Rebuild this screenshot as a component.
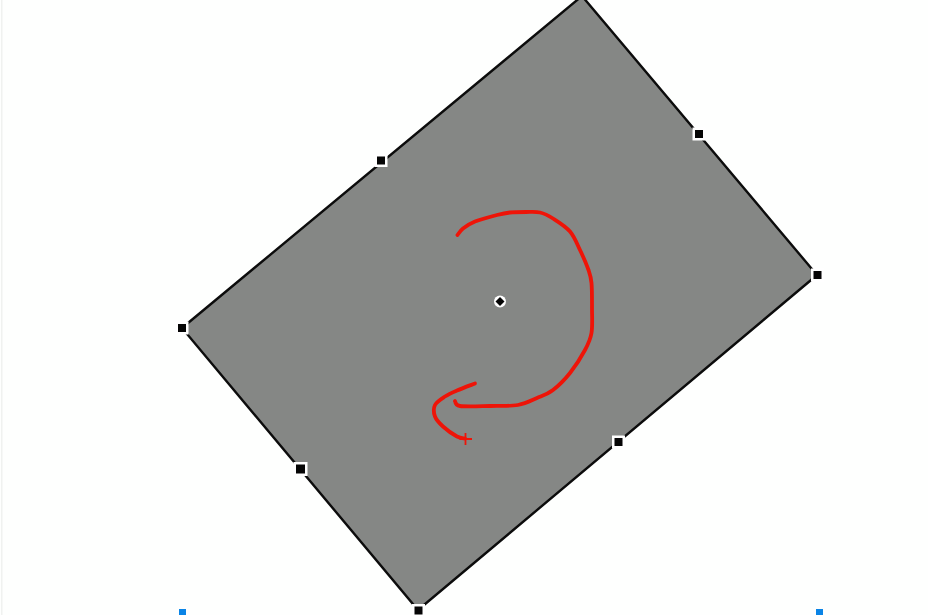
const SHAPE = '582,-4 817,275 418,610 182,328'

const HANDLES = [
  { x: 381, y: 160.5, size: 8 },
  { x: 699, y: 134, size: 8 },
  { x: 817.5, y: 275, size: 8 },
  { x: 618.5, y: 442, size: 8 },
  { x: 418.5, y: 610.5, size: 8 },
  { x: 300.5, y: 469, size: 9 },
  { x: 182, y: 328, size: 8 },
]

const STROKE_MAIN = [
  [457.5, 235], [463, 228.5], [475, 221.5], [497, 215], [510, 212.5], [526, 212], [540, 212.5], [553, 218.5],
  [570, 231.5], [580, 250], [588.5, 270], [591.5, 283], [592, 308], [591.5, 333], [585, 350], [570, 373],
  [553, 390], [537, 398], [518, 405], [490, 406], [460, 406], [455, 401],
]
const STROKE_TAIL = [
  [475, 383.5], [457, 390.5], [445, 396.5], [435, 405], [435, 416.5], [443, 426.5], [457, 436.5], [465, 438.5],
]

// smooths the hand drawn points into a curve
function smooth(pts: number[][]) {
  let d = `M${pts[0][0]} ${pts[0][1]}`
  for (let i = 0; i < pts.length - 1; i++) {
    const p0 = pts[Math.max(i - 1, 0)]
    const p1 = pts[i]
    const p2 = pts[i + 1]
    const p3 = pts[Math.min(i + 2, pts.length - 1)]
    const c1x = p1[0] + (p2[0] - p0[0]) / 6
    const c1y = p1[1] + (p2[1] - p0[1]) / 6
    const c2x = p2[0] - (p3[0] - p1[0]) / 6
    const c2y = p2[1] - (p3[1] - p1[1]) / 6
    d += ` C${c1x} ${c1y} ${c2x} ${c2y} ${p2[0]} ${p2[1]}`
  }
  return d
}

export default function App() {
  return (
    <div className="h-[615px] w-[928px] overflow-hidden bg-[#fefffe]">
      <svg width="928" height="615" viewBox="0 0 928 615" className="block blur-[0.4px]">
        <rect x="1" y="0" width="1.5" height="615" fill="#f0f2f0" />

        {/* rotated rectangle */}
        <polygon points={SHAPE} fill="#858785" stroke="#0c0c0c" strokeWidth="2.4" />

        {/* freehand rotate path */}
        <g fill="none" stroke="#ee1408" strokeLinejoin="round" strokeLinecap="round">
          <path d={smooth(STROKE_MAIN)} strokeWidth="3.8" />
          <path d={smooth(STROKE_TAIL)} strokeWidth="3.8" />
          <path d="M465.5 433 V445 M459.5 439 H472" strokeWidth="1.8" strokeLinecap="butt" />
        </g>

        {/* selection handles */}
        {HANDLES.map(({ x, y, size }) => (
          <g key={`${x}-${y}`}>
            <rect x={x - size / 2 - 2.5} y={y - size / 2 - 2.5} width={size + 5} height={size + 5} fill="#fff" />
            <rect x={x - size / 2} y={y - size / 2} width={size} height={size} fill="#050505" />
          </g>
        ))}

        {/* pivot */}
        <circle cx="500" cy="301.5" r="6" fill="#fff" />
        <polygon points="500,297 504.5,301.5 500,306 495.5,301.5" fill="#050505" />

        {/* blue markers cut off by the bottom edge */}
        <rect x="179" y="609" width="7" height="6" fill="#0a84e6" />
        <rect x="816" y="609" width="7" height="6" fill="#0a84e6" />
      </svg>
    </div>
  )
}
